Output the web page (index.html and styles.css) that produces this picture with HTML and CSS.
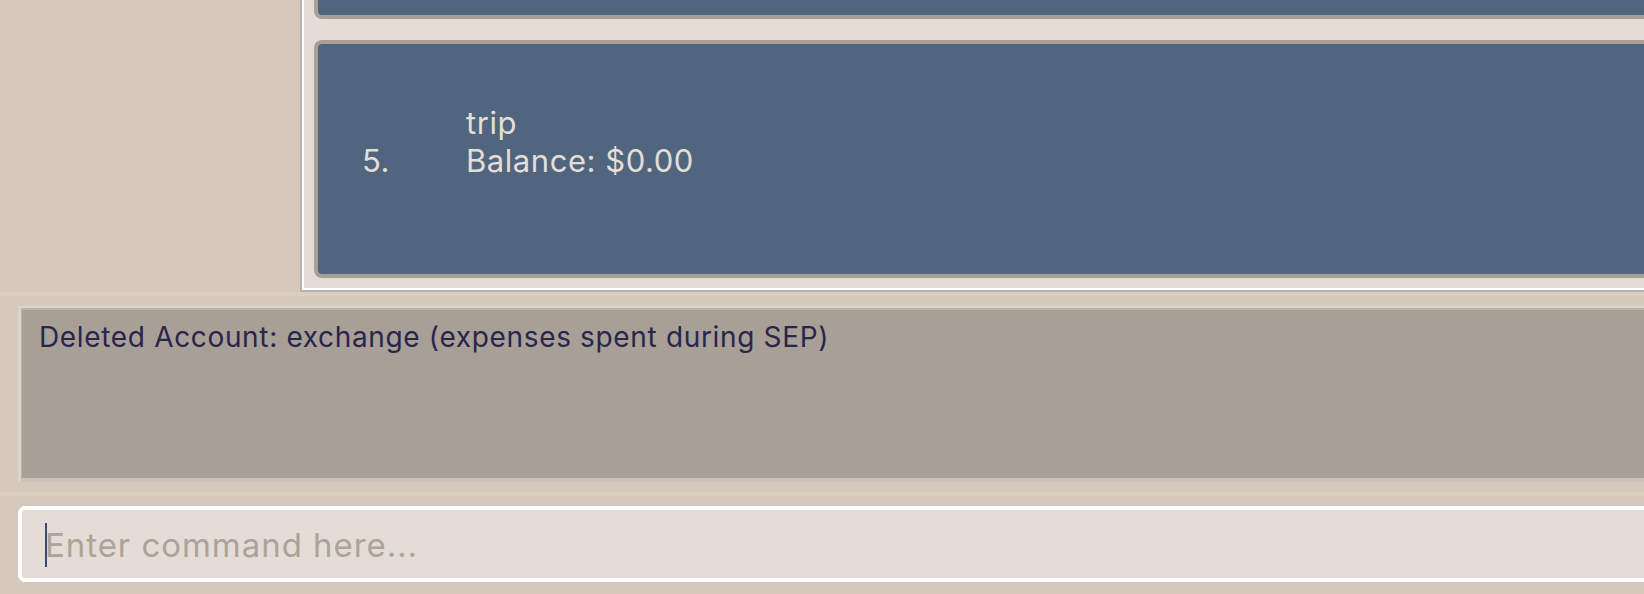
FILE: index.html
```html
<!DOCTYPE html>
<html lang="en">
<head>
<meta charset="utf-8">
<title>Accounts</title>
<link rel="stylesheet" href="styles.css">
</head>
<body>
<div class="app">
  <div class="top">
    <aside class="sidebar"></aside>
    <section class="list-panel">
      <div class="card card-prev"></div>
      <div class="card">
        <div class="idx">5.</div>
        <div class="name">trip</div>
        <div class="balance">Balance: $0.00</div>
      </div>
    </section>
  </div>
  <div class="divider divider-a"></div>
  <div class="result-wrap">
    <div class="result">Deleted Account: exchange (expenses spent during SEP)</div>
  </div>
  <div class="divider divider-b"></div>
  <div class="command-box">
    <span class="caret"></span><span class="placeholder">Enter command here...</span>
  </div>
</div>
</body>
</html>
```
FILE: styles.css
```css
html, body {
  margin: 0;
  padding: 0;
  height: 100%;
  overflow: hidden;
}
body {
  background: #d6c8bb;
  font-family: "Inter", "Open Sans", sans-serif;
}
.app {
  display: flex;
  flex-direction: column;
  height: 594px;
}
.top {
  display: grid;
  grid-template-columns: 300px 1fr;
  height: 292px;
  flex: none;
}
.list-panel {
  display: flex;
  flex-direction: column;
  justify-content: flex-end;
  gap: 21px;
  overflow: hidden;
  background: #e4dcd6;
  border-left: 2px solid #b4b1b1;
  border-bottom: 2px solid #b4b1b1;
  box-shadow: inset 2px -2px 0 0 #ffffff;
  padding: 0 0 12px 12px;
}
.card {
  flex: none;
  box-sizing: border-box;
  height: 238px;
  background: #51667e;
  border: 4px solid #a89f95;
  border-right: none;
  border-radius: 8px 0 0 8px;
  padding: 60px 0 0 44px;
  display: grid;
  grid-template-columns: 104px 1fr;
  grid-template-rows: 38px 38px;
  align-content: start;
  color: #e4ded8;
  font-size: 31px;
  line-height: 38px;
  letter-spacing: 0.55px;
}
.idx {
  grid-column: 1;
  grid-row: 2;
}
.name {
  grid-column: 2;
  grid-row: 1;
}
.balance {
  grid-column: 2;
  grid-row: 2;
}
.divider {
  flex: none;
  height: 4px;
  background: #dacec3;
}
.divider-a {
  margin-bottom: 10px;
}
.divider-b {
  margin: 10px 0;
}
.result-wrap {
  flex: none;
  margin-left: 18px;
  border-left: 3px solid #ddd3ca;
  border-top: 2px solid #ddd3ca;
}
.result {
  box-sizing: border-box;
  height: 174px;
  background: #a89f96;
  border-top: 2px solid #b9b3ae;
  border-left: 1px solid #b9b3ae;
  border-bottom: 4px solid #c9c2bb;
  padding: 10px 0 0 17px;
  color: #29264d;
  font-size: 28px;
  line-height: 34px;
  letter-spacing: 0.66px;
  white-space: nowrap;
}
.command-box {
  flex: none;
  box-sizing: border-box;
  height: 76px;
  margin-left: 18px;
  background: #e4dcd6;
  border: 4px solid #ffffff;
  border-right: none;
  border-radius: 7px 0 0 7px;
  display: flex;
  align-items: center;
  padding: 2px 0 0 23px;
  font-size: 33px;
  line-height: 40px;
  letter-spacing: 0.95px;
  white-space: nowrap;
}
.caret {
  display: inline-block;
  width: 2px;
  height: 44px;
  background: #3b4c6b;
  margin-right: -2px;
}
.placeholder {
  color: #ada399;
}
```
